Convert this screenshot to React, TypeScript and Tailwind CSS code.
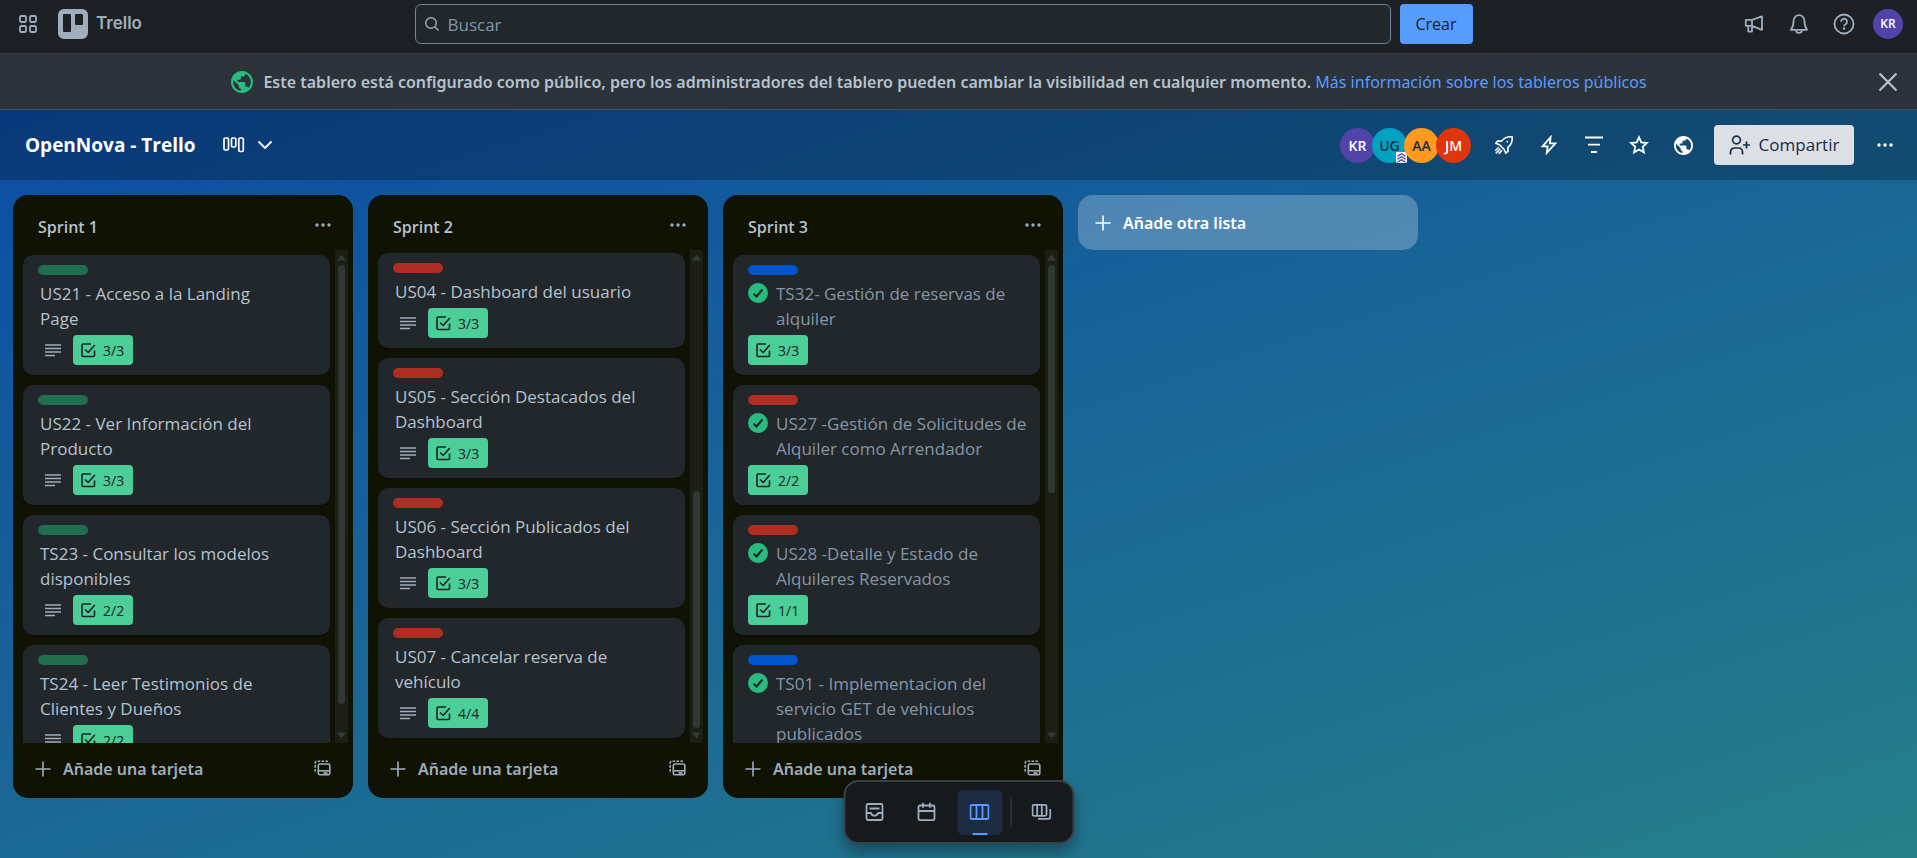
import type { ReactNode, SVGProps } from 'react';

type IconProps = SVGProps<SVGSVGElement>;

function Icon({ children, ...rest }: IconProps) {
  return (
    <svg
      viewBox="0 0 20 20"
      width="20"
      height="20"
      fill="none"
      stroke="currentColor"
      strokeWidth="1.8"
      strokeLinecap="butt"
      strokeLinejoin="round"
      aria-hidden="true"
      {...rest}
    >
      {children}
    </svg>
  );
}

const GridIcon = () => (
  <Icon>
    <rect x="2" y="2" width="6" height="6" rx="1.2" />
    <rect x="12" y="2" width="6" height="6" rx="1.2" />
    <rect x="2" y="12" width="6" height="6" rx="1.2" />
    <rect x="12" y="12" width="6" height="6" rx="1.2" />
  </Icon>
);

const TrelloMark = () => (
  <svg viewBox="0 0 30 30" width="30" height="30" aria-hidden="true">
    <path
      fill="currentColor"
      fillRule="evenodd"
      d="M6 0h18a6 6 0 0 1 6 6v18a6 6 0 0 1-6 6H6a6 6 0 0 1-6-6V6a6 6 0 0 1 6-6Zm0 5a1 1 0 0 0-1 1v16a1 1 0 0 0 1 1h6a1 1 0 0 0 1-1V6a1 1 0 0 0-1-1H6Zm12 0a1 1 0 0 0-1 1v9a1 1 0 0 0 1 1h6a1 1 0 0 0 1-1V6a1 1 0 0 0-1-1h-6Z"
    />
  </svg>
);

const SearchIcon = () => (
  <Icon viewBox="0 0 16 16" width="16" height="16" strokeWidth="1.4">
    <circle cx="7" cy="7" r="5.3" />
    <path d="m10.8 10.8 3.7 3.7" />
  </Icon>
);

const MegaphoneIcon = () => (
  <Icon>
    <path d="M1.800 5.800h6.200v6H1.800zM8 5.800 18 2.400v13.400L8 11.800M4.300 11.800v5.800h3.700v-5.800" />
  </Icon>
);

const BellIcon = () => (
  <Icon>
    <path d="M10 1.200a5.400 5.400 0 0 0-5.400 5.400c0 5.500-1 7-2.600 9.200h16c-1.600-2.200-2.600-3.700-2.600-9.200A5.400 5.400 0 0 0 10 1.200Z" />
    <path d="M7.200 16.500a2.800 2.400 0 0 0 5.600 0" />
  </Icon>
);

const HelpIcon = () => (
  <Icon viewBox="0 0 22 22" width="22" height="22">
    <circle cx="11" cy="11" r="9.500" />
    <path d="M8 8.800a3 3 0 1 1 4.600 2.500c-1 .6-1.600 1-1.600 2" />
    <circle cx="11" cy="15.500" r="1.200" fill="currentColor" stroke="none" />
  </Icon>
);

const GlobeIcon = ({ size }: { size: number }) => (
  <svg viewBox="2 2 20 20" width={size} height={size} fill="currentColor" aria-hidden="true">
    <path d="M12 2C6.480 2 2 6.480 2 12s4.480 10 10 10 10-4.480 10-10S17.520 2 12 2zm-1 17.930c-3.950-.49-7-3.850-7-7.930 0-.62.080-1.210.210-1.790L9 15v1c0 1.100.9 2 2 2v1.930zm6.900-2.540c-.26-.81-1-1.390-1.900-1.390h-1v-3c0-.55-.45-1-1-1H8v-2h2c.55 0 1-.45 1-1V7h2c1.100 0 2-.9 2-2v-.41c2.930 1.190 5 4.060 5 7.410 0 2.080-.8 3.970-2.100 5.390z" />
  </svg>
);

const CloseIcon = () => (
  <Icon strokeWidth="2.200">
    <path d="m1.500 1.500 17 17M18.500 1.500l-17 17" />
  </Icon>
);

const ViewIcon = () => (
  <Icon viewBox="0 0 22 16" width="22" height="16" strokeWidth="1.700">
    <rect x="1" y="1" width="4.500" height="12" rx="1.300" />
    <rect x="8.500" y="1" width="4.300" height="9" rx="1.300" />
    <rect x="15.800" y="1" width="4.500" height="13.500" rx="1.300" />
  </Icon>
);

const ChevronIcon = () => (
  <Icon viewBox="0 0 16 10" width="16" height="10">
    <path d="m1.500 1.500 6.500 6.500 6.500-6.500" />
  </Icon>
);

const RocketIcon = () => (
  <Icon strokeWidth="1.600">
    <path d="M18.200 1.800c-4.700-.4-8.200 1-10.600 4.300l-4-.1L1.800 8.200l3.700 1.600 4.700 4.700 1.600 3.700 2.200-1.800-.1-4c3.300-2.400 4.700-5.900 4.300-10.600Z" />
    <path d="M4.800 12.300 1.300 15.800M6.400 13.800l-4.600 4.600M8 15.400l-3.300 3.300" />
    <circle cx="13.300" cy="6.700" r=".9" fill="currentColor" stroke="none" />
  </Icon>
);

const BoltIcon = () => (
  <Icon>
    <path strokeLinejoin="miter" d="M11.600 2.200 3.600 11.300h5L7.800 17.800l8.600-9.400h-5.500l.7-6.200Z" />
  </Icon>
);

const FilterIcon = () => (
  <Icon>
    <path d="M1 2.500h18M4 9.700h12M7 17h6" />
  </Icon>
);

const StarIcon = () => (
  <Icon>
    <path
      strokeLinejoin="miter"
      d="m10 2.200 2.300 5.200 5.600.6-4.200 3.800 1.200 5.600-4.900-2.900-4.900 2.900 1.200-5.600L2.100 8l5.600-.6L10 2.200Z"
    />
  </Icon>
);

const ShareIcon = () => (
  <Icon viewBox="0 0 22 20" width="22" height="20" strokeWidth="1.700">
    <circle cx="7.500" cy="5" r="3.900" />
    <path d="M1.500 19.500v-2.500a4 4 0 0 1 4-4h4a4 4 0 0 1 4 4v2.500M17.500 6.500v7M14 10h7" />
  </Icon>
);

const DotsIcon = () => (
  <svg viewBox="0 0 16 4" width="16" height="4" fill="currentColor" aria-hidden="true">
    <circle cx="2" cy="2" r="1.700" />
    <circle cx="8" cy="2" r="1.700" />
    <circle cx="14" cy="2" r="1.700" />
  </svg>
);

const LinesIcon = () => (
  <Icon viewBox="0 0 16 14" width="16" height="14" strokeWidth="1.600">
    <path d="M0 2h16M0 5.500h16M0 9h16M0 12.500h10" />
  </Icon>
);

const CheckBoxIcon = () => (
  <Icon viewBox="0 0 16 16" width="16" height="16" strokeWidth="1.600">
    <path d="M11 2H3a1 1 0 0 0-1 1v10.500a1 1 0 0 0 1 1h10.500a1 1 0 0 0 1-1V8.500" />
    <path d="m5 7.500 3.200 3 6.600-7.500" />
  </Icon>
);

const PlusIcon = () => (
  <Icon viewBox="0 0 16 16" width="16" height="16" strokeWidth="1.600">
    <path d="M8 .5v15M.5 8h15" />
  </Icon>
);

const TemplateIcon = () => (
  <Icon viewBox="0 0 17 16" width="17" height="16" strokeWidth="1.600">
    <rect x="4.300" y="4" width="11.500" height="10.800" rx="1.500" />
    <path d="M4.500 10.800h11" />
    <path strokeWidth="1.800" d="M9.500 13h4" />
    <path strokeDasharray="2.600 1.300" d="M14 1.200H3a1.800 1.800 0 0 0-1.800 1.800V13" />
  </Icon>
);

const DoneIcon = () => (
  <svg viewBox="0 0 20 20" width="20" height="20" aria-hidden="true">
    <circle cx="10" cy="10" r="10" fill="#2abb7f" />
    <path d="m5.500 10.600 3 2.900 6-7" fill="none" stroke="#1d2125" strokeWidth="2" />
  </svg>
);

const InboxIcon = () => (
  <Icon>
    <rect x="2" y="2" width="16" height="16" rx="1.500" />
    <path d="M5 6.500h10M2 11h4.500c.4 1.800 1.700 2.700 3.500 2.700s3.100-.9 3.500-2.700H18" />
  </Icon>
);

const CalendarIcon = () => (
  <Icon>
    <rect x="2" y="3.500" width="16" height="14.700" rx="1.500" />
    <path d="M2 9h16M6.500.8v5M13.500.8v5" />
  </Icon>
);

const BoardIcon = () => (
  <Icon>
    <rect x="1" y="3" width="18" height="14" rx="1.500" />
    <path d="M7 3v14M13 3v14" />
  </Icon>
);

const BoardsIcon = () => (
  <Icon>
    <rect x="1" y="2.800" width="14" height="11" rx="1.500" />
    <path d="M5.700 3v11M10.300 3v11M18.800 7v7.800a2 2 0 0 1-2 2H6.500" />
  </Icon>
);

type Tone = 'green' | 'red' | 'blue';

const toneClass: Record<Tone, string> = {
  green: 'bg-[#216e4e]',
  red: 'bg-[#ae2e24]',
  blue: 'bg-[#0055cc]',
};

interface CardData {
  title: string;
  tone: Tone;
  checks?: string;
  done?: boolean;
}

interface ListData {
  name: string;
  atEnd?: boolean;
  // Relative sizes of the scrollbar track above, on and below the thumb.
  before: number;
  thumb: number;
  after: number;
  cards: CardData[];
}

const lists: ListData[] = [
  {
    name: 'Sprint 1',
    before: 0,
    thumb: 439,
    after: 24,
    cards: [
      { title: 'US21 - Acceso a la Landing Page', tone: 'green', checks: '3/3' },
      { title: 'US22 - Ver Información del Producto', tone: 'green', checks: '3/3' },
      { title: 'TS23 - Consultar los modelos disponibles', tone: 'green', checks: '2/2' },
      { title: 'TS24 - Leer Testimonios de Clientes y Dueños', tone: 'green', checks: '2/2' },
    ],
  },
  {
    name: 'Sprint 2',
    atEnd: true,
    before: 226,
    thumb: 237,
    after: 0,
    cards: [
      { title: 'US04 - Dashboard del usuario', tone: 'red', checks: '3/3' },
      { title: 'US05 - Sección Destacados del Dashboard', tone: 'red', checks: '3/3' },
      { title: 'US06 - Sección Publicados del Dashboard', tone: 'red', checks: '3/3' },
      { title: 'US07 - Cancelar reserva de vehículo', tone: 'red', checks: '4/4' },
    ],
  },
  {
    name: 'Sprint 3',
    before: 0,
    thumb: 228,
    after: 235,
    cards: [
      { title: 'TS32- Gestión de reservas de alquiler', tone: 'blue', checks: '3/3', done: true },
      { title: 'US27 -Gestión de Solicitudes de Alquiler como Arrendador', tone: 'red', checks: '2/2', done: true },
      { title: 'US28 -Detalle y Estado de Alquileres Reservados', tone: 'red', checks: '1/1', done: true },
      { title: 'TS01 - Implementacion del servicio GET de vehiculos publicados', tone: 'blue', done: true },
    ],
  },
];

function Card({ card }: { card: CardData }) {
  return (
    <li className="shrink-0 rounded-[10px] bg-[#22272b] py-[10px] pr-[10px] pl-[15px] shadow-[0_1px_1px_rgba(9,14,17,0.8)]">
      <div className={`h-[10px] w-[50px] rounded-full ${toneClass[card.tone]}`} />
      <div className="mt-[6px] flex items-start">
        {card.done && (
          <span className="mt-[2px] mr-2 shrink-0">
            <DoneIcon />
          </span>
        )}
        <a
          href="#card"
          className={`block text-[17px] leading-[25px] ${card.done ? 'text-[#8696a7]' : 'pr-[31px] pl-[2px] text-[#b6c2cf]'}`}
        >
          {card.title}
        </a>
      </div>
      <div className="mt-1 flex h-[30px] items-center gap-[5px]">
        {!card.done && (
          <span className="flex h-[30px] w-[30px] items-center justify-center text-[#9fadbc]">
            <LinesIcon />
          </span>
        )}
        {card.checks && (
          <span className="flex h-[30px] w-[60px] items-center gap-[7px] rounded-[4px] bg-[#4bce97] pl-[7px] text-[14px] text-[#1d2125]">
            <CheckBoxIcon />
            {card.checks}
          </span>
        )}
      </div>
    </li>
  );
}

function Scrollbar({ list }: { list: ListData }) {
  return (
    <div className="flex w-[13px] shrink-0 flex-col items-center bg-[#1c1f16]" aria-hidden="true">
      <svg viewBox="0 0 9 6" width="9" height="15" className="shrink-0" fill="#343b34">
        <path d="M4.500 0 9 6H0z" />
      </svg>
      <div style={{ flexGrow: list.before }} />
      <div className="w-[7px] rounded-full bg-[#2f3833]" style={{ flexGrow: list.thumb }} />
      <div style={{ flexGrow: list.after }} />
      <svg viewBox="0 0 9 6" width="9" height="15" className="shrink-0" fill="#343b34">
        <path d="M0 0h9L4.500 6z" />
      </svg>
    </div>
  );
}

function List({ list }: { list: ListData }) {
  return (
    <section className="flex min-h-0 w-[340px] shrink-0 flex-col rounded-[15px] bg-[#101204] text-[#b6c2cf]">
      <header className="flex h-[55px] shrink-0 items-center justify-between pt-2 pr-[22px] pl-[25px]">
        <h2 className="text-[16px] font-semibold">{list.name}</h2>
        <button type="button" aria-label={`Acciones de ${list.name}`} className="pb-1 text-[#9fadbc]">
          <DotsIcon />
        </button>
      </header>
      <div className="flex min-h-0 flex-1 gap-[5px] pr-[5px] pl-[10px]">
        <ol
          className={`flex min-w-0 flex-1 flex-col gap-[10px] overflow-hidden py-[5px] ${list.atEnd ? 'justify-end' : 'justify-start'}`}
        >
          {list.cards.map((card) => (
            <Card key={card.title} card={card} />
          ))}
        </ol>
        <Scrollbar list={list} />
      </div>
      <footer className="flex h-[55px] shrink-0 items-center justify-between pr-[22px] pb-[3px] pl-[22px] text-[#9fadbc]">
        <button type="button" className="flex items-center gap-3 font-['Noto_Sans',sans-serif] text-[16px] font-semibold">
          <PlusIcon />
          Añade una tarjeta
        </button>
        <button type="button" aria-label="Crear desde plantilla" className="pb-[3px]">
          <TemplateIcon />
        </button>
      </footer>
    </section>
  );
}

function IconButton({ label, children }: { label: string; children: ReactNode }) {
  return (
    <button type="button" aria-label={label} className="flex h-10 w-[45px] items-center justify-center">
      {children}
    </button>
  );
}

const members = [
  { initials: 'KR', color: 'bg-[#5243aa] text-white' },
  { initials: 'UG', color: 'bg-[#00a3bf] text-[#172b4d]' },
  { initials: 'AA', color: 'bg-[#ff991f] text-[#172b4d]' },
  { initials: 'JM', color: 'bg-[#de350b] text-white' },
];

export default function App() {
  return (
    <div className="flex h-screen flex-col overflow-hidden bg-[linear-gradient(162deg,#0a48a6_0%,#16609a_42%,#267f88_100%)] font-['Open_Sans','Noto_Sans',sans-serif] text-[16px]">
      <header className="flex h-[54px] shrink-0 items-start border-b border-[#333b43] bg-[#1d2125] pt-1 text-[#9fadbc]">
        <div className="flex h-10 grow basis-0 items-center pl-[18px]">
          <button type="button" aria-label="Cambiar de aplicación">
            <GridIcon />
          </button>
          <a href="#home" className="ml-5 flex items-center gap-2 font-['Inter',sans-serif] text-[17px] font-semibold">
            <TrelloMark />
            Trello
          </a>
        </div>
        <div className="flex h-10 w-[976px] items-center gap-2 rounded-[6px] border border-[#738496] bg-[#22272b] px-2">
          <SearchIcon />
          <input
            type="search"
            aria-label="Buscar"
            placeholder="Buscar"
            className="h-full min-w-0 flex-1 bg-transparent text-[17px] outline-none placeholder:text-[#8696a7]"
          />
        </div>
        <button type="button" className="ml-[9px] h-10 w-[73px] rounded-[4px] bg-[#579dff] text-[16px] font-medium text-[#1d2125]">
          Crear
        </button>
        <div className="flex h-10 grow basis-12 items-center justify-end pr-[14px]">
          <IconButton label="Novedades">
            <MegaphoneIcon />
          </IconButton>
          <IconButton label="Notificaciones">
            <BellIcon />
          </IconButton>
          <IconButton label="Ayuda">
            <HelpIcon />
          </IconButton>
          <button
            type="button"
            className="ml-[7px] h-[30px] w-[30px] rounded-full bg-[#5243aa] text-[12px] font-semibold text-white"
          >
            KR
          </button>
        </div>
      </header>

      <div className="flex h-14 shrink-0 items-center border-b border-[#454f59] bg-[#2c333a] pr-[19px] text-[#b6c2cf]">
        <div className="flex flex-1 items-center justify-center">
          <span className="mr-[10px] text-[#2abb7f]">
            <GlobeIcon size={22} />
          </span>
          <p className="font-['Noto_Sans',sans-serif] text-[16px]">
            <span className="font-semibold">
              Este tablero está configurado como público, pero los administradores del tablero pueden cambiar la
              visibilidad en cualquier momento.{' '}
            </span>
            <a href="#info" className="text-[#579dff]">
              Más información sobre los tableros públicos
            </a>
          </p>
        </div>
        <button type="button" aria-label="Cerrar">
          <CloseIcon />
        </button>
      </div>

      <div className="flex h-[70px] shrink-0 items-center justify-between bg-black/25 pr-[10px] pl-[25px] text-white">
        <div className="flex items-center">
          <h1 className="text-[19px] font-bold">OpenNova - Trello</h1>
          <button type="button" aria-label="Vistas" className="ml-[27px] flex items-center gap-3">
            <ViewIcon />
            <ChevronIcon />
          </button>
        </div>
        <div className="flex items-center">
          <ul className="mr-[10px] flex">
            {members.map((m) => (
              <li
                key={m.initials}
                className={`relative -ml-[3px] flex h-[35px] w-[35px] items-center justify-center rounded-full text-[14px] font-semibold ${m.color}`}
              >
                {m.initials}
                {m.initials === 'UG' && (
                  <svg viewBox="0 0 11 11" width="11" height="11" className="absolute right-0 bottom-0" aria-hidden="true">
                    <rect width="11" height="11" rx="1" fill="#f1f2f4" />
                    <path d="m1.500 4.200 4-2.500 4 2.500M1.500 7.200l4-2.500 4 2.500M1.500 10.200l4-2.500 4 2.500" fill="none" stroke="#5243aa" strokeWidth="1.300" />
                  </svg>
                )}
              </li>
            ))}
          </ul>
          <IconButton label="Power-Ups">
            <RocketIcon />
          </IconButton>
          <IconButton label="Automatización">
            <BoltIcon />
          </IconButton>
          <IconButton label="Filtros">
            <FilterIcon />
          </IconButton>
          <IconButton label="Favorito">
            <StarIcon />
          </IconButton>
          <IconButton label="Visibilidad">
            <GlobeIcon size={19} />
          </IconButton>
          <button
            type="button"
            className="mr-2 ml-2 flex h-10 w-[140px] items-center justify-center gap-2 rounded-[4px] bg-[#dcdfe4] text-[17px] font-medium text-[#172b4d]"
          >
            <ShareIcon />
            Compartir
          </button>
          <IconButton label="Más">
            <DotsIcon />
          </IconButton>
        </div>
      </div>

      <main className="flex min-h-0 flex-1 gap-[15px] px-[13px] pt-[15px] pb-[60px]">
        {lists.map((list) => (
          <List key={list.name} list={list} />
        ))}
        <button
          type="button"
          className="flex h-[55px] w-[340px] shrink-0 items-center gap-3 rounded-[15px] bg-white/25 pl-[17px] font-['Noto_Sans',sans-serif] text-[16px] font-semibold text-white"
        >
          <PlusIcon />
          Añade otra lista
        </button>
      </main>

      <nav className="fixed bottom-[14px] left-1/2 flex h-16 w-[231px] -translate-x-1/2 items-center rounded-[15px] border-2 border-[#38414a] bg-[#161a1d] px-[7px] text-[#9fadbc] shadow-[0_8px_16px_rgba(0,0,0,0.35)]">
        <button type="button" aria-label="Bandeja" className="flex h-[45px] w-[45px] items-center justify-center">
          <InboxIcon />
        </button>
        <button type="button" aria-label="Planificador" className="ml-[7px] flex h-[45px] w-[45px] items-center justify-center">
          <CalendarIcon />
        </button>
        <button
          type="button"
          aria-label="Tablero"
          className="relative ml-2 flex h-[45px] w-[45px] items-center justify-center rounded-[6px] bg-[#1c2b41] text-[#579dff]"
        >
          <BoardIcon />
          <span className="absolute bottom-0 h-[2px] w-[15px] bg-[#579dff]" />
        </button>
        <span className="ml-2 h-[30px] w-px bg-[#38414a]" />
        <button type="button" aria-label="Cambiar de tablero" className="ml-2 flex h-[45px] w-[45px] items-center justify-center">
          <BoardsIcon />
        </button>
      </nav>
    </div>
  );
}
